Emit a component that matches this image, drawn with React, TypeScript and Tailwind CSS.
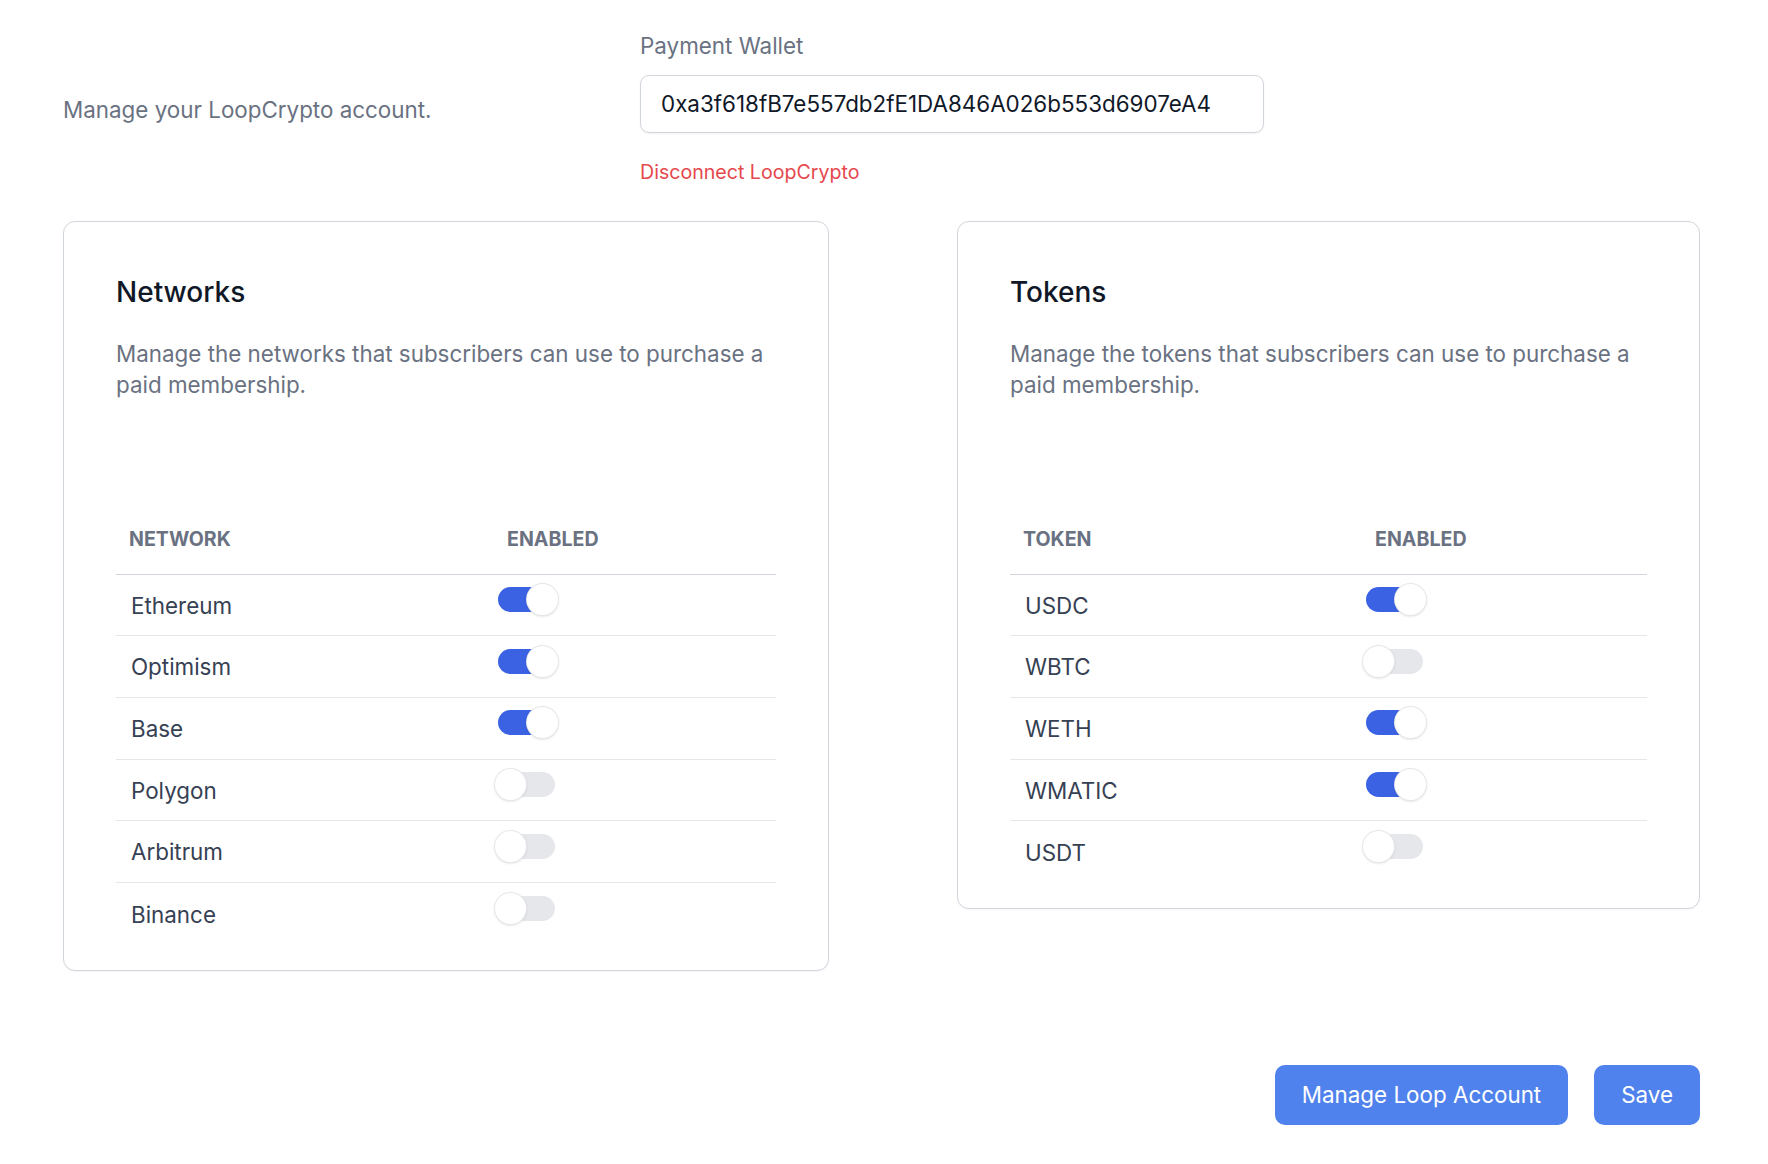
import { useState } from "react"

type Item = { name: string; enabled: boolean }

const networks: Item[] = [
    { name: "Ethereum", enabled: true },
    { name: "Optimism", enabled: true },
    { name: "Base", enabled: true },
    { name: "Polygon", enabled: false },
    { name: "Arbitrum", enabled: false },
    { name: "Binance", enabled: false },
]

const tokens: Item[] = [
    { name: "USDC", enabled: true },
    { name: "WBTC", enabled: false },
    { name: "WETH", enabled: true },
    { name: "WMATIC", enabled: true },
    { name: "USDT", enabled: false },
]

function Toggle({ on, onClick }: { on: boolean; onClick: () => void }) {
    return (
        <button
            type="button"
            onClick={onClick}
            className="relative mb-[11px] ml-px flex h-[31px] w-[63px] items-center"
        >
            <span
                className={`mx-[3px] h-[25px] w-full rounded-full ${on ? "bg-[#3a62e3]" : "bg-gray-200"}`}
            />
            <span
                className={`absolute top-0 h-[31px] w-[31px] rounded-full bg-white shadow-[0_1px_3px_rgba(0,0,0,0.18)] ring-1 ring-gray-200 ${on ? "right-0" : "left-0"}`}
            />
        </button>
    )
}

function SettingsCard({
    title,
    description,
    column,
    items,
    width,
    firstCol,
}: {
    title: string
    description: string
    column: string
    items: Item[]
    width: string
    firstCol: string
}) {
    const [rows, setRows] = useState(items)

    const toggle = (i: number) => {
        setRows(rows.map((r, idx) => (idx === i ? { ...r, enabled: !r.enabled } : r)))
    }

    return (
        <div className={`${width} rounded-[12px] border border-gray-300 bg-white px-[52px] pt-[51px] pb-[25px] shadow-[0_1px_2px_rgba(0,0,0,0.04)]`}>
            <h2 className="text-[28px] leading-[39px] font-medium text-gray-900">{title}</h2>
            <p className="mt-[26px] text-[22.4px] leading-[31.5px] text-gray-500">{description}</p>

            <div className="mt-[103px]">
                <div className="flex h-[71px] items-center border-b border-gray-300 pt-[3px] text-[19.6px] font-bold text-gray-500 uppercase">
                    <div className={`${firstCol} px-[13px]`}>{column}</div>
                    <div className="px-[13px]">Enabled</div>
                </div>
                {rows.map((row, i) => (
                    <div
                        key={row.name}
                        className={`flex h-[61.7px] items-center ${i < rows.length - 1 ? "border-b border-gray-200" : ""}`}
                    >
                        <div className={`${firstCol} pt-px pl-[15px] text-[22.4px] text-gray-700`}>{row.name}</div>
                        <Toggle on={row.enabled} onClick={() => toggle(i)} />
                    </div>
                ))}
            </div>
        </div>
    )
}

export default function App() {
    const [wallet, setWallet] = useState("0xa3f618fB7e557db2fE1DA846A026b553d6907eA4")

    return (
        <div className="min-h-screen bg-white pl-[63px] pr-[68px] font-['Inter','Noto_Sans',sans-serif]">
            <div className="flex">
                <div className="w-[577px] pt-[93px]">
                    <p className="text-[22.4px] leading-[33.6px] text-gray-500">Manage your LoopCrypto account.</p>
                </div>
                <div className="pt-[29px]">
                    <label className="block text-[22.4px] leading-[33.6px] text-gray-500">Payment Wallet</label>
                    <input
                        className="mt-[12px] block h-[58px] w-[624px] rounded-[9px] border border-gray-300 px-[20px] text-[22.4px] text-gray-900 shadow-[0_1px_2px_rgba(0,0,0,0.05)] focus:outline-none"
                        value={wallet}
                        onChange={(e) => setWallet(e.target.value)}
                    />
                    <button className="mt-[25px] block text-[19.6px] leading-[28px] text-[#e5484d]">
                        Disconnect LoopCrypto
                    </button>
                </div>
            </div>

            <div className="mt-[35px] flex items-start justify-between">
                <SettingsCard
                    title="Networks"
                    description="Manage the networks that subscribers can use to purchase a paid membership."
                    column="Network"
                    items={networks}
                    width="w-[766px]"
                    firstCol="w-[378px]"
                />
                <SettingsCard
                    title="Tokens"
                    description="Manage the tokens that subscribers can use to purchase a paid membership."
                    column="Token"
                    items={tokens}
                    width="w-[743px]"
                    firstCol="w-[352px]"
                />
            </div>

            <div className="mt-[94px] flex justify-end gap-[26px]">
                <button className="h-[60px] rounded-[10px] bg-[#5082ed] px-[27px] text-[22.4px] text-white">
                    Manage Loop Account
                </button>
                <button className="h-[60px] rounded-[10px] bg-[#5082ed] px-[27px] text-[22.4px] text-white">
                    Save
                </button>
            </div>
        </div>
    )
}
